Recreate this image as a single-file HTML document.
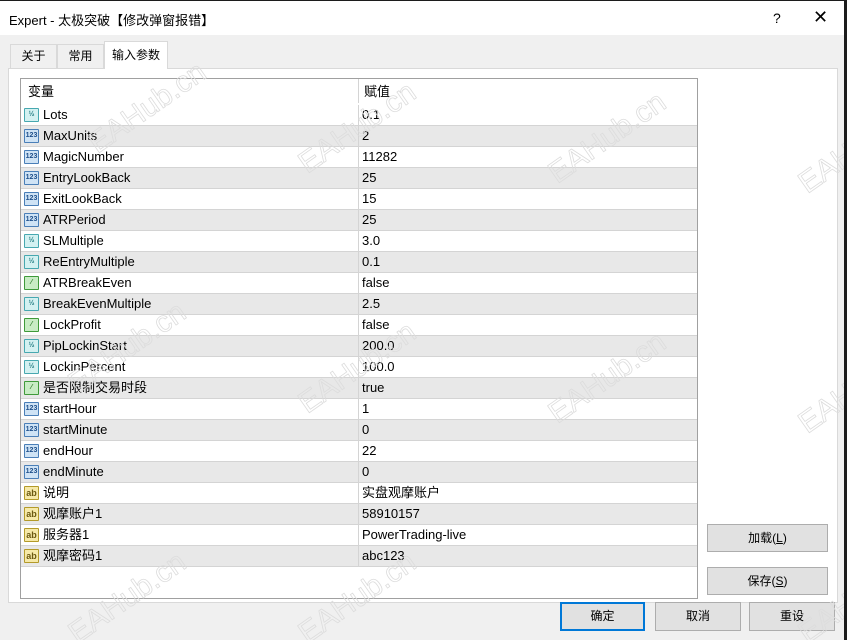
<!DOCTYPE html><html><head><meta charset="utf-8"><style>
*{margin:0;padding:0;box-sizing:border-box}
html,body{width:847px;height:640px;overflow:hidden}
body{background:#1c1c1c;position:relative;font-family:"Liberation Sans","Noto Sans CJK SC",sans-serif;font-size:12px;color:#000}
.win{position:absolute;left:0;top:1px;width:844px;height:639px;background:#f0f0f0;overflow:hidden}
.title{position:absolute;left:0;top:0;width:844px;height:34px;background:#fff;font-size:13px}
.a{position:absolute}
.tab{position:absolute;border:1px solid #d9d9d9;border-bottom:none;background:#f0f0f0;text-align:center;line-height:22px}
.panel{position:absolute;left:8px;top:67px;width:830px;height:535px;background:#fff;border:1px solid #d9d9d9}
.tbl{position:absolute;left:20px;top:77px;width:678px;height:521px;border:1px solid #a0a0a0;background:#fff;overflow:hidden}
.row{position:absolute;left:0;width:676px;height:21px;border-bottom:1px solid #d4d4d4;line-height:20px;font-size:13px}
.row.g{background:#e8e8e8}
.row .n{position:absolute;left:22px}
.row .v{position:absolute;left:341px}
.row .d{position:absolute;left:337px;top:0;height:21px;border-left:1px solid #d4d4d4}
.ic{position:absolute;left:3px;top:3px;width:15px;height:14px;border:1px solid;font-size:7px;line-height:12px;text-align:center;font-weight:bold;border-radius:1px}
.i1{background:#cfe3f5;border-color:#4a7fb8;color:#1d4e8a}
.i2{background:#d3f1f1;border-color:#47a8b0;color:#1f7a80}
.i3{background:#c8ecc4;border-color:#3f9a3a;color:#2a7a25}
.i4{background:#f6e9a8;border-color:#b39a2a;color:#6a5810;font-size:9px}
.btn{position:absolute;background:#e1e1e1;border:1px solid #adadad;text-align:center;font-size:12px}
.wm{position:absolute;color:transparent;-webkit-text-stroke:0.8px #dcdcdc;font-size:30px;transform:rotate(-35deg);font-family:"Liberation Sans",sans-serif;white-space:nowrap}
</style></head><body>
<div class="win">
<div class="title"><span class="a" style="left:9px;top:9px">Expert - 太极突破【修改弹窗报错】</span><span class="a" style="left:773px;top:9px;font-size:14px">?</span><span class="a" style="left:813px;top:6px;font-size:18px">✕</span></div>
<div class="panel"></div>
<div class="tab" style="left:10px;top:43px;width:47px;height:24px">关于</div>
<div class="tab" style="left:57px;top:43px;width:47px;height:24px">常用</div>
<div class="tab" style="left:104px;top:40px;width:64px;height:28px;background:#fff;line-height:26px">输入参数</div>
<div class="tbl">
<div class="row" style="top:0;height:24px;border:none;line-height:26px;background:transparent"><span class="n" style="left:7px">变量</span><span class="v" style="left:343px">赋值</span><span class="d" style="height:24px"></span></div>
</div>
<div class="btn" style="left:707px;top:523px;width:121px;height:28px;line-height:26px">加载(<u>L</u>)</div>
<div class="btn" style="left:707px;top:566px;width:121px;height:28px;line-height:26px">保存(<u>S</u>)</div>
<div class="btn" style="left:560px;top:601px;width:85px;height:29px;line-height:25px;border:2px solid #0078d7">确定</div>
<div class="btn" style="left:655px;top:601px;width:86px;height:29px;line-height:27px">取消</div>
<div class="btn" style="left:749px;top:601px;width:86px;height:29px;line-height:27px">重设</div>
<div id="wms"></div>
</div>
<script>
var d=[["i2","Lots","0.1"],["i1","MaxUnits","2"],["i1","MagicNumber","11282"],["i1","EntryLookBack","25"],["i1","ExitLookBack","15"],["i1","ATRPeriod","25"],["i2","SLMultiple","3.0"],["i2","ReEntryMultiple","0.1"],["i3","ATRBreakEven","false"],["i2","BreakEvenMultiple","2.5"],["i3","LockProfit","false"],["i2","PipLockinStart","200.0"],["i2","LockinPercent","100.0"],["i3","是否限制交易时段","true"],["i1","startHour","1"],["i1","startMinute","0"],["i1","endHour","22"],["i1","endMinute","0"],["i4","说明","实盘观摩账户"],["i4","观摩账户1","58910157"],["i4","服务器1","PowerTrading-live"],["i4","观摩密码1","abc123"]];
var t=document.querySelector('.tbl'),h='';
var lab={i1:"123",i2:"½",i3:"⁄",i4:"ab"};
d.forEach(function(r,i){h+='<div class="row'+(i%2?' g':'')+'" style="top:'+(26+i*21)+'px"><span class="ic '+r[0]+'">'+lab[r[0]]+'</span><span class="n">'+r[1]+'</span><span class="d"></span><span class="v">'+r[2]+'</span></div>';});
t.innerHTML+=h;
var w=[[80,90],[290,110],[540,120],[790,130],[60,330],[290,350],[540,360],[790,370],[60,580],[290,580],[790,580]],s='';
w.forEach(function(p){s+='<div class="wm" style="left:'+p[0]+'px;top:'+p[1]+'px">EAHub.cn</div>';});
document.getElementById('wms').innerHTML=s;
</script>
</body></html>
